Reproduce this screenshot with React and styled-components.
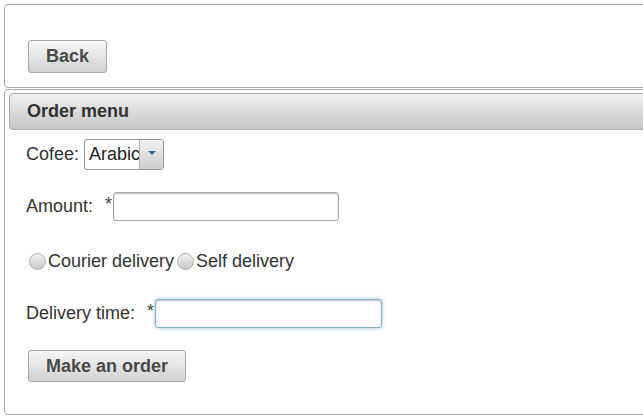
import React from "react";
import styled, { createGlobalStyle } from "styled-components";

const GlobalStyle = createGlobalStyle`
  html, body {
    margin: 0;
    padding: 0;
    background: #fff;
    overflow: hidden;
  }
  body {
    font-family: "Liberation Sans", Arial, sans-serif;
    font-size: 18px;
    color: #333;
  }
`;

const Page = styled.div`
  width: 720px;
  padding: 4px;
  display: flex;
  flex-direction: column;
  gap: 1px;
`;

const Panel = styled.div`
  border: 1px solid #a8a8a8;
  border-radius: 4px;
  background: #fff;
`;

const TopPanel = styled(Panel)`
  padding: 35px 0 14px 23px;
`;

const OrderPanel = styled(Panel)`
  padding: 3px 4px 32px;
`;

const Button = styled.button`
  height: ${(p) => p.$h || 33}px;
  margin-left: ${(p) => p.$ml || 0}px;
  padding: 0 17px;
  border: 1px solid #a8a8a8;
  border-radius: 3px;
  background: linear-gradient(#f6f6f6, #d2d2d2);
  font-family: inherit;
  font-size: 18px;
  font-weight: bold;
  color: #4a4a4a;
  cursor: pointer;
`;

const Header = styled.div`
  height: 35px;
  display: flex;
  align-items: center;
  padding-left: 17px;
  border: 1px solid #aaa;
  border-radius: 4px;
  background: linear-gradient(#f0f0f0, #c6c6c6);
  font-weight: bold;
  color: #333;
`;

const Form = styled.div`
  display: flex;
  flex-direction: column;
  padding-left: 17px;
`;

const Row = styled.div`
  display: flex;
  align-items: center;
  height: ${(p) => p.$h}px;
  margin-top: ${(p) => p.$mt}px;
`;

const Label = styled.label`
  margin-right: ${(p) => p.$gap ?? 12}px;
`;

const Star = styled.span`
  align-self: flex-start;
  margin-top: 2px;
  width: 8px;
  color: #444;
`;

const SelectBox = styled.div`
  margin-left: 5px;
  width: 80px;
  height: 31px;
  box-sizing: border-box;
  display: flex;
  border: 1px solid #999;
  border-radius: 3px;
  overflow: hidden;
  background: #fff;
`;

const SelectText = styled.div`
  flex: 1;
  padding-left: 4px;
  display: flex;
  align-items: center;
  overflow: hidden;
  white-space: nowrap;
  color: #222;
`;

const SelectArrow = styled.div`
  width: 23px;
  flex-shrink: 0;
  display: flex;
  align-items: center;
  justify-content: center;
  border-left: 1px solid #b5b5b5;
  background: linear-gradient(#f2f2f2, #cdcdcd);
  &::after {
    content: "";
    border-left: 4px solid transparent;
    border-right: 4px solid transparent;
    border-top: 4px solid #2e6e9e;
    margin-top: -4px;
  }
`;

const Input = styled.input`
  width: ${(p) => p.$w}px;
  height: 29px;
  box-sizing: border-box;
  border: 1px solid ${(p) => (p.$focus ? "#85b2cb" : "#a8a8a8")};
  border-radius: 3px;
  box-shadow: ${(p) =>
    p.$focus
      ? "0 0 4px #9ec3d8, inset 0 1px 2px rgba(0,0,0,0.25)"
      : "inset 0 1px 2px rgba(0,0,0,0.25)"};
  outline: none;
  font-family: inherit;
  font-size: 16px;
  padding: 0 4px;
`;

const Radio = styled.span`
  width: 17px;
  height: 17px;
  box-sizing: border-box;
  border-radius: 50%;
  border: 1px solid #b0b0b0;
  background: linear-gradient(#f0f0f0, #c9c9c9);
  margin: 0 2px 0 ${(p) => p.$ml || 0}px;
`;

const RadioText = styled.span`
  color: #333;
`;

export default function App() {
  return (
    <>
      <GlobalStyle />
      <Page>
        <TopPanel>
          <Button>Back</Button>
        </TopPanel>
        <OrderPanel>
          <Header>Order menu</Header>
          <Form>
            <Row $h={31} $mt={9}>
              <Label $gap={0}>Cofee:</Label>
              <SelectBox>
                <SelectText>Arabic</SelectText>
                <SelectArrow />
              </SelectBox>
            </Row>
            <Row $h={29} $mt={22}>
              <Label>Amount:</Label>
              <Star>*</Star>
              <Input $w={226} />
            </Row>
            <Row $h={20} $mt={30}>
              <Radio $ml={3} />
              <RadioText>Courier delivery</RadioText>
              <Radio $ml={3} />
              <RadioText>Self delivery</RadioText>
            </Row>
            <Row $h={29} $mt={28}>
              <Label>Delivery time:</Label>
              <Star>*</Star>
              <Input $w={227} $focus />
            </Row>
            <Row $h={32} $mt={22}>
              <Button $h={32} $ml={2}>Make an order</Button>
            </Row>
          </Form>
        </OrderPanel>
      </Page>
    </>
  );
}
